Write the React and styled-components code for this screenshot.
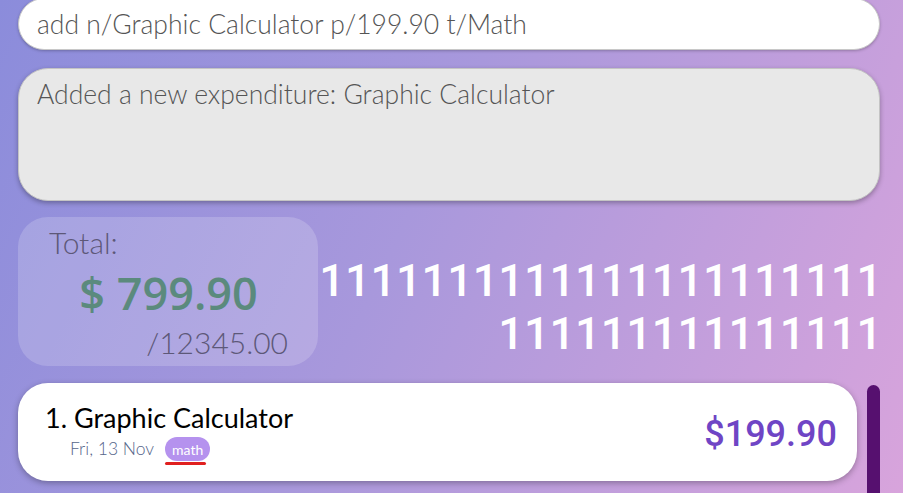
import React from 'react';
import styled, { createGlobalStyle } from 'styled-components';

const GlobalStyle = createGlobalStyle`
    html, body {
        margin: 0;
        padding: 0;
    }
    body {
        width: 903px;
        height: 493px;
        overflow: hidden;
        font-family: Lato, "Open Sans", sans-serif;
    }
`;

const Window = styled.div`
    width: 903px;
    height: 493px;
    box-sizing: border-box;
    padding: 0 23px 0 18px;
    background: linear-gradient(115deg, #8b8cdb 0%, #a898dc 45%, #d8a4dc 100%);
    display: flex;
    flex-direction: column;
    overflow: hidden;
`;

const CommandBox = styled.div`
    margin-top: -2px;
    height: 52px;
    box-sizing: border-box;
    background: #ffffff;
    border: 1px solid #c8c8c8;
    border-radius: 26px;
    display: flex;
    align-items: center;
    padding: 0 0 0 18px;
    font-size: 26.5px;
    font-weight: 300;
    color: #555555;
    box-shadow: 0 1px 3px rgba(0, 0, 0, 0.25);
`;

const ResultBox = styled.div`
    margin-top: 18px;
    height: 133px;
    box-sizing: border-box;
    background: #e8e8e8;
    border: 1px solid #c4c4c4;
    border-radius: 30px;
    padding: 9px 18px;
    font-size: 26.5px;
    font-weight: 300;
    color: #555555;
    box-shadow: 0 2px 5px rgba(0, 0, 0, 0.3);
`;

const SummaryRow = styled.div`
    margin-top: 16px;
    height: 149px;
    display: flex;
    align-items: flex-start;
`;

const TotalCard = styled.div`
    width: 300px;
    height: 149px;
    box-sizing: border-box;
    border-radius: 30px;
    background: rgba(255, 255, 255, 0.18);
    padding: 6px 30px 0 31px;
    display: flex;
    flex-direction: column;
    color: #5d5878;
`;

const TotalLabel = styled.div`
    font-size: 30px;
    font-weight: 300;
    line-height: 38px;
`;

const TotalAmount = styled.div`
    font-family: "Open Sans", sans-serif;
    font-weight: 600;
    font-size: 45px;
    color: #5b8a7d;
    text-align: center;
    line-height: 56px;
    margin-top: 4px;
`;

const Budget = styled.div`
    font-size: 30px;
    font-weight: 300;
    text-align: right;
    line-height: 40px;
    margin-top: 1px;
`;

const Ones = styled.div`
    flex: 1;
    display: flex;
    flex-direction: column;
    align-items: flex-end;
    margin-top: 37px;
    margin-right: -2px;
`;

const OnesLine = styled.div`
    font-family: Roboto, "Open Sans", sans-serif;
    font-weight: 500;
    font-size: 45px;
    line-height: 53px;
    height: 53px;
    color: #ffffff;
    white-space: nowrap;
`;

const ListArea = styled.div`
    margin-top: 17px;
    display: flex;
    gap: 10px;
    flex: 1;
`;

const ExpenseCard = styled.div`
    width: 840px;
    height: 98px;
    box-sizing: border-box;
    background: #ffffff;
    border-radius: 30px;
    box-shadow: 0 2px 6px rgba(0, 0, 0, 0.3);
    display: flex;
    align-items: center;
    padding: 0 20px 0 27px;
`;

const CardInfo = styled.div`
    flex: 1;
    display: flex;
    flex-direction: column;
    margin-top: -3px;
`;

const CardTitle = styled.div`
    font-size: 27px;
    color: #000000;
    line-height: 36px;
`;

const MetaRow = styled.div`
    display: flex;
    align-items: center;
    gap: 11px;
    padding-left: 25px;
`;

const DateText = styled.span`
    font-size: 17.5px;
    font-weight: 300;
    color: #56668a;
`;

const Tag = styled.span`
    position: relative;
    height: 24px;
    padding: 0 7px;
    border-radius: 12px;
    background: #b592ee;
    color: #ffffff;
    font-size: 14px;
    display: inline-flex;
    align-items: center;
    margin-top: 1px;

    &::after {
        content: '';
        position: absolute;
        left: 0;
        right: 4px;
        bottom: -4px;
        height: 3px;
        border-radius: 2px;
        background: #e0201f;
    }
`;

const Price = styled.div`
    font-family: Roboto, sans-serif;
    font-weight: 500;
    font-size: 36px;
    color: #6f45c5;
    margin-top: 3px;
`;

const ScrollThumb = styled.div`
    width: 13px;
    margin-top: 2px;
    border-radius: 7px 7px 0 0;
    background: #56106f;
`;

export default function App() {
    return (
        <>
            <GlobalStyle />
            <Window>
                <CommandBox>add n/Graphic Calculator p/199.90 t/Math</CommandBox>
                <ResultBox>Added a new expenditure: Graphic Calculator</ResultBox>
                <SummaryRow>
                    <TotalCard>
                        <TotalLabel>Total:</TotalLabel>
                        <TotalAmount>$ 799.90</TotalAmount>
                        <Budget>/12345.00</Budget>
                    </TotalCard>
                    <Ones>
                        <OnesLine>{'1'.repeat(22)}</OnesLine>
                        <OnesLine>{'1'.repeat(15)}</OnesLine>
                    </Ones>
                </SummaryRow>
                <ListArea>
                    <ExpenseCard>
                        <CardInfo>
                            <CardTitle>1. Graphic Calculator</CardTitle>
                            <MetaRow>
                                <DateText>Fri, 13 Nov</DateText>
                                <Tag>math</Tag>
                            </MetaRow>
                        </CardInfo>
                        <Price>$199.90</Price>
                    </ExpenseCard>
                    <ScrollThumb />
                </ListArea>
            </Window>
        </>
    );
}
